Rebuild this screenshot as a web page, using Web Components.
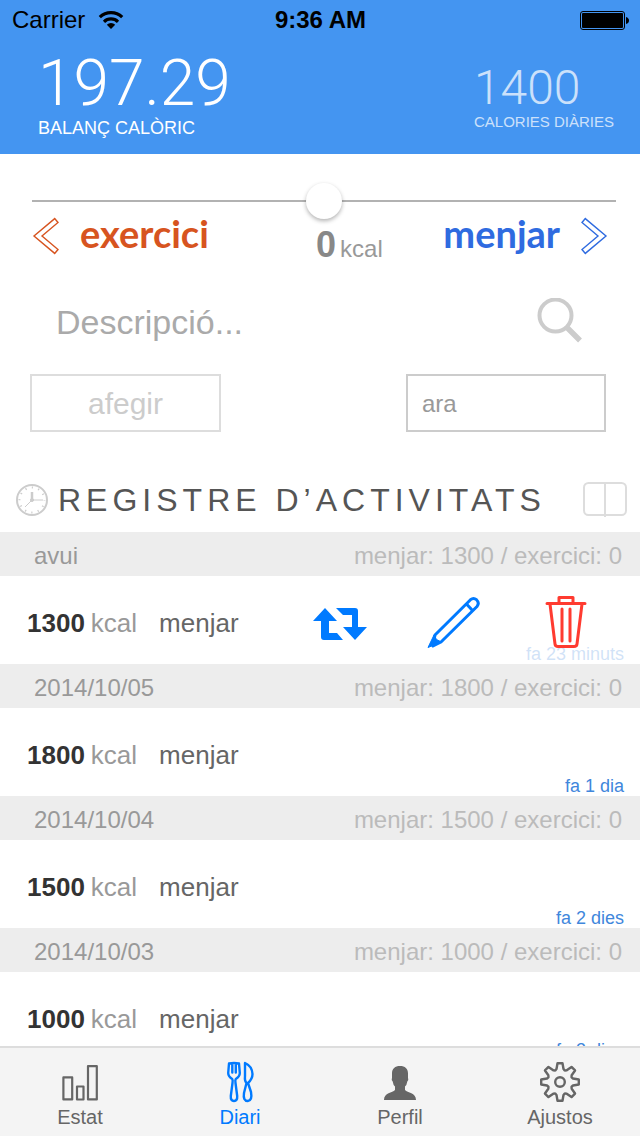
<!DOCTYPE html>
<html lang="ca">
<head>
<meta charset="utf-8">
<meta name="viewport" content="width=device-width, initial-scale=1">
<title>Diari</title>
<style>
  body { margin: 0; background: #fff; font-family: "Liberation Sans", Arial, sans-serif; color: #555; }
</style>
</head>
<body>
<diary-app></diary-app>

<script>
const define = (name, html, setup) => {
  const template = document.createElement('template');
  template.innerHTML = html;
  customElements.define(name, class extends HTMLElement {
    constructor() {
      super();
      this.attachShadow({ mode: 'open' }).append(template.content.cloneNode(true));
    }
    connectedCallback() { if (setup) setup(this, this.shadowRoot); }
  });
};

define('status-bar', `
  <style>
    :host { display: grid; grid-template-columns: 1fr auto 1fr; align-items: center; height: 40px; padding: 0 11px 0 12px; font-size: 24px; line-height: 40px; color: #000; }
    .carrier { display: flex; align-items: center; gap: 13px; }
    .battery { justify-self: end; }
    svg { display: block; }
  </style>
  <div class="carrier"><span>Carrier</span>
    <svg width="26" height="20" viewBox="0 0 26 20" fill="none" stroke="#000" stroke-width="3.200" aria-label="Wi-Fi">
      <path d="M1.800 7.200a16 16 0 0 1 22.400 0M6 11.800a10 10 0 0 1 14 0"/>
      <path d="M13 19l-4.200-4.200a6 6 0 0 1 8.400 0z" fill="#000" stroke="none"/>
    </svg>
  </div>
  <b>9:36 AM</b>
  <svg class="battery" width="49" height="20" viewBox="0 0 49 20" aria-label="Bateria">
    <rect x=".5" y="1.500" width="44" height="18" rx="2.500" fill="none" stroke="#000"/>
    <rect x="2" y="3" width="41" height="15" rx="1"/>
    <path d="M46 7q3 1 3 3.500t-3 3.500z"/>
  </svg>
`);

define('calorie-figure', `
  <style>
    :host { display: block; color: #fff; }
    .value { display: block; font-family: Roboto, "Liberation Sans", sans-serif; font-weight: 300; font-size: 64px; line-height: 64px; }
    .label { display: block; font-size: 18px; line-height: 20px; padding-top: 2px; }
    :host([minor]) { padding-bottom: 6px; opacity: .72; }
    :host([minor]) .value { font-size: 48px; line-height: 48px; }
    :host([minor]) .label { font-size: 15px; padding-top: 0; }
  </style>
  <span class="value"><slot name="value"></slot></span>
  <span class="label"><slot></slot></span>
`);

define('summary-header', `
  <style>
    :host { display: block; background: #4495f1; }
    .figures { display: flex; justify-content: space-between; align-items: end; padding: 12px 26px 16px 38px; }
  </style>
  <slot name="status"></slot>
  <div class="figures"><slot></slot></div>
`);

define('entry-form', `
  <style>
    :host { display: block; padding-top: 29px; }
    button, input { font: inherit; margin: 0; box-sizing: border-box; background: none; border: 0; padding: 0; border-radius: 0; outline: none; }
    svg { display: block; flex: none; }
    .slider { display: block; padding: 0 24px 0 32px; }
    input[type=range] { display: block; appearance: none; -webkit-appearance: none; width: 100%; height: 36px; background: linear-gradient(#b2b2b2, #b2b2b2) center / 100% 2px no-repeat; }
    input[type=range]::-webkit-slider-thumb { -webkit-appearance: none; width: 36px; height: 36px; border-radius: 50%; background: #fff; box-shadow: 0 2px 4px rgba(0,0,0,.3); }
    .kinds { display: grid; grid-template-columns: 1fr 1fr; padding: 0 32px 0 24px; height: 55px; }
    .half { display: flex; justify-content: space-between; align-items: start; }
    .kind { display: flex; align-items: start; gap: 20px; height: 36px; font-family: Lato, sans-serif; font-weight: 700; font-size: 38px; line-height: 28px; }
    .kind svg { margin-top: -2px; }
    .food { color: #2f6be0; }
    .sport { color: #d75420; padding-left: 8px; }
    output { display: flex; align-items: baseline; gap: 4px; color: #999; font-size: 24px; line-height: 52px; }
    output b { font-size: 36px; color: #888; }
    .search { display: flex; align-items: center; padding: 18px 57px 0 56px; }
    .search input { flex: 1; min-width: 0; height: 60px; font-size: 34px; color: #555; }
    .search input::placeholder { color: #aaa; opacity: 1; }
    .submit { display: flex; justify-content: space-between; padding: 22px 34px 36px 30px; }
    .submit > * { height: 58px; border: 2px solid #ddd; padding-top: 2px; }
    .add { width: 191px; font-size: 30px; color: #ccc; }
    .when { width: 200px; padding: 2px 14px 0; border-color: #ccc; font-size: 24px; color: #999; }
  </style>
  <label class="slider"><input type="range" min="-1000" max="1000" value="0" aria-label="Calories"></label>
  <div class="kinds">
    <div class="half">
      <button class="kind sport" type="button">
        <svg width="28" height="38" viewBox="0 0 28 38" fill="none" stroke="currentColor" stroke-width="1.400"><path d="M22.700 1.600L2 19l20.700 17.400 3.300-3.900L10 19 26 5.500z"/></svg>
        <span>exercici</span></button>
    </div>
    <div class="half">
      <output><b>0</b><span>kcal</span></output>
      <button class="kind food" type="button"><span>menjar</span>
        <svg width="28" height="38" viewBox="0 0 28 38" fill="none" stroke="currentColor" stroke-width="1.400"><path d="M5.300 1.600L26 19 5.300 36.400 2 32.500 18 19 2 5.500z"/></svg>
      </button>
    </div>
  </div>
  <div class="search">
    <input type="text" placeholder="Descripció..." aria-label="Descripció">
    <button type="button" aria-label="Cercar">
      <svg width="46" height="48" viewBox="0 0 46 48" fill="none" stroke="#ccc"><circle cx="18.500" cy="17.500" r="16" stroke-width="4"/><path d="M29.500 29L43 42.500" stroke-width="5.500"/></svg>
    </button>
  </div>
  <div class="submit">
    <button class="add" type="button">afegir</button>
    <input class="when" type="text" value="ara" aria-label="Quan">
  </div>
`);

define('log-title', `
  <style>
    :host { display: flex; align-items: center; gap: 10px; height: 64px; padding: 0 13px 0 16px; }
    h1 { flex: 1; margin: 0; font-weight: 400; font-size: 32px; line-height: 40px; letter-spacing: 5px; white-space: nowrap; color: #555; }
    svg { display: block; flex: none; }
    button { border: 0; padding: 0; background: none; }
  </style>
  <svg width="32" height="32" viewBox="0 0 32 32" fill="none" stroke="#ccc" aria-hidden="true">
    <circle cx="16" cy="16" r="15" stroke-width="2"/>
    <circle cx="16" cy="16" r="12.500" stroke-width="2" stroke-dasharray="1.200 5.345" stroke-dashoffset=".6"/>
    <path d="M16 8v8" stroke-width="2.500"/><path d="M16 16h11M16 16l-7 7" stroke-width="1"/>
    <circle cx="16" cy="16" r="1.500" fill="#ccc"/>
  </svg>
  <h1><slot></slot></h1>
  <button type="button" aria-label="Catàleg">
    <svg width="44" height="36" viewBox="0 0 44 36" fill="none" stroke="#ddd" stroke-width="2"><rect x="1" y="1" width="42" height="32" rx="4.500"/><path d="M22 1v34"/></svg>
  </button>
`);

define('log-day', `
  <style>
    :host { display: block; }
    h2 { display: flex; justify-content: space-between; box-sizing: border-box; height: 44px; margin: 0; padding: 3px 18px 0 34px; background: #ededed; font-weight: 400; font-size: 24px; line-height: 41px; color: #999; }
    .total { color: #bbb; }
  </style>
  <h2><slot name="date"></slot><span class="total"><slot name="total"></slot></span></h2>
  <slot></slot>
`);

define('log-entry', `
  <style>
    :host { display: flex; align-items: center; gap: 22px; position: relative; height: 88px; padding: 0 16px 0 27px; font-size: 26px; line-height: 32px; }
    .amount, .name { padding-top: 6px; }
    .amount { display: flex; gap: 6px; color: #999; }
    .amount b { color: #333; }
    .name { color: #666; }
    .time { align-self: end; margin-left: auto; font-size: 18px; line-height: 20px; color: #3f87dc; }
  </style>
  <span class="amount"><b><slot name="amount"></slot></b><span>kcal</span></span>
  <span class="name"><slot></slot></span>
  <span class="time"><slot name="time"></slot></span>
  <slot name="actions"></slot>
`);

define('entry-actions', `
  <style>
    :host { position: absolute; top: 0; right: 0; bottom: 0; display: grid; grid-template-columns: repeat(3, 113px); padding-right: 18px; background: rgba(255,255,255,.76); }
    button { display: grid; place-items: center; border: 0; padding: 4px 0 0; background: none; color: #007aff; }
    .delete { color: #ff3b30; }
    svg { display: block; }
  </style>
  <button type="button" aria-label="Repetir">
    <svg width="54" height="54" viewBox="0 -3 54 54" fill="currentColor"><path d="M12 10l12 13h-8v12h8l6 7H11q-3 0-3-3V23H0zM23 10h19q3 0 3 3v16h9L42 42 30 29h9V17h-9z"/></svg>
  </button>
  <button type="button" aria-label="Editar">
    <svg width="54" height="54" viewBox="-1 -2 54 54" fill="none" stroke="currentColor" stroke-width="3" stroke-linejoin="round"><path d="M8 38L43.500 2.700q3-2.500 6 0 3.300 3.300.5 6.800L14 45 6 49z"/><path d="M39.500 7l6 6.500"/><path d="M1 50.500L7 38l2.500 4.500 5 2.500z" fill="currentColor" stroke-width="1"/></svg>
  </button>
  <button class="delete" type="button" aria-label="Esborrar">
    <svg width="42" height="54" viewBox="0 0 42 54" fill="none" stroke="currentColor" stroke-width="3" stroke-linecap="round" stroke-linejoin="round"><path d="M2 8.500h38M14 8V2.500h14V8M5 9l5 40q.3 2.500 3 2.500h16q2.700 0 3-2.500l5-40M17 14v32M25 14v32"/></svg>
  </button>
`);

define('tab-item', `
  <style>
    :host { display: block; color: #666; }
    :host([current]) { color: #007aff; }
    a { display: flex; flex-direction: column; align-items: center; color: inherit; text-decoration: none; font-size: 20px; line-height: 24px; padding: 11px 0 7px; }
    .icon { display: grid; place-items: center; height: 46px; }
  </style>
  <a href="#"><span class="icon"><slot name="icon"></slot></span><span><slot></slot></span></a>
`, (host, root) => { root.querySelector('a').href = '#' + host.getAttribute('to'); });

define('tab-bar', `
  <style>
    :host { display: grid; grid-template-columns: repeat(4, 1fr); border-top: 2px solid #ddd; background: #f4f4f4; }
    svg { display: block; }
  </style>
  <tab-item to="estat">
    <svg slot="icon" width="40" height="40" viewBox="0 0 40 40" fill="none" stroke="currentColor" stroke-width="2.200" stroke-linejoin="round"><path d="M3.400 15.400h8.800v22H3.400zM17 24.500h6.500v13H17zM28 4.100h8.800v33.300H28z"/></svg>Estat</tab-item>
  <tab-item to="diari" current>
    <svg slot="icon" width="40" height="42" viewBox="0 0 40 42" fill="none" stroke="currentColor" stroke-width="2.400" stroke-linejoin="round" stroke-linecap="round"><path d="M9 2.500L8.200 12q0 3.500 4 6 .8 1 .3 4l-1.700 13q-.3 5 3.200 5t3.200-5l-1.700-13q-.5-3 .3-4 4-2.500 4-6L19 2.500q-5-1-10 0zM12.300 2.500v9M15.800 2.500v9"/><path d="M25 2q7 3 7.500 11 0 5-4.500 9l3 9q1.500 8.500-3.200 9-5 0-3.800-8L26.500 22q-2-2-1.500-7z"/></svg>Diari</tab-item>
  <tab-item to="perfil">
    <svg slot="icon" width="40" height="40" viewBox="0 0 40 40" fill="currentColor"><path d="M20 4c5 0 8 2.500 8 7.500v4q.8 2-.7 4-.5 3.500-2.300 5v3.500c2.500 3 11 2.500 11 10H4c0-7.500 8.500-7 11-10v-3.500q-1.800-1.500-2.300-5-1.500-2-.7-4v-4C12 6.500 15 4 20 4z"/></svg>Perfil</tab-item>
  <tab-item to="ajustos">
    <svg slot="icon" width="42" height="42" viewBox="-21 -21 42 42" fill="none" stroke="currentColor" stroke-width="2.400" stroke-linejoin="round"><circle r="4.800"/><path class="gear"/></svg>Ajustos</tab-item>
`, (host, root) => {
  // One tooth of the gear, repeated every 45 degrees.
  const tooth = [[-4.7, -11.6], [-3.5, -13], [-2.5, -18.8], [2.5, -18.8], [3.5, -13], [4.7, -11.6]];
  const points = [];
  for (let i = 0; i < 8; i++) {
    const a = i * Math.PI / 4;
    for (const [x, y] of tooth) points.push((x * Math.cos(a) - y * Math.sin(a)).toFixed(2) + ' ' + (x * Math.sin(a) + y * Math.cos(a)).toFixed(2));
  }
  root.querySelector('.gear').setAttribute('d', 'M' + points.join('L') + 'z');
});

define('diary-app', `
  <style>
    :host { display: flex; flex-direction: column; height: 100vh; }
    main { flex: 1; min-height: 0; overflow-y: auto; scrollbar-width: none; }
    summary-header, entry-form, log-title, tab-bar { flex: none; }
  </style>
  <summary-header>
    <status-bar slot="status"></status-bar>
    <calorie-figure><span slot="value">197.29</span>BALANÇ CALÒRIC</calorie-figure>
    <calorie-figure minor><span slot="value">1400</span>CALORIES DIÀRIES</calorie-figure>
  </summary-header>
  <entry-form></entry-form>
  <log-title>REGISTRE D’ACTIVITATS</log-title>
  <main>
    <log-day><span slot="date">avui</span><span slot="total">menjar: 1300 / exercici: 0</span>
      <log-entry><span slot="amount">1300</span>menjar<span slot="time">fa 23 minuts</span><entry-actions slot="actions"></entry-actions></log-entry>
    </log-day>
    <log-day><span slot="date">2014/10/05</span><span slot="total">menjar: 1800 / exercici: 0</span>
      <log-entry><span slot="amount">1800</span>menjar<span slot="time">fa 1 dia</span></log-entry>
    </log-day>
    <log-day><span slot="date">2014/10/04</span><span slot="total">menjar: 1500 / exercici: 0</span>
      <log-entry><span slot="amount">1500</span>menjar<span slot="time">fa 2 dies</span></log-entry>
    </log-day>
    <log-day><span slot="date">2014/10/03</span><span slot="total">menjar: 1000 / exercici: 0</span>
      <log-entry><span slot="amount">1000</span>menjar<span slot="time">fa 3 dies</span></log-entry>
    </log-day>
  </main>
  <tab-bar></tab-bar>
`);
</script>
</body>
</html>
